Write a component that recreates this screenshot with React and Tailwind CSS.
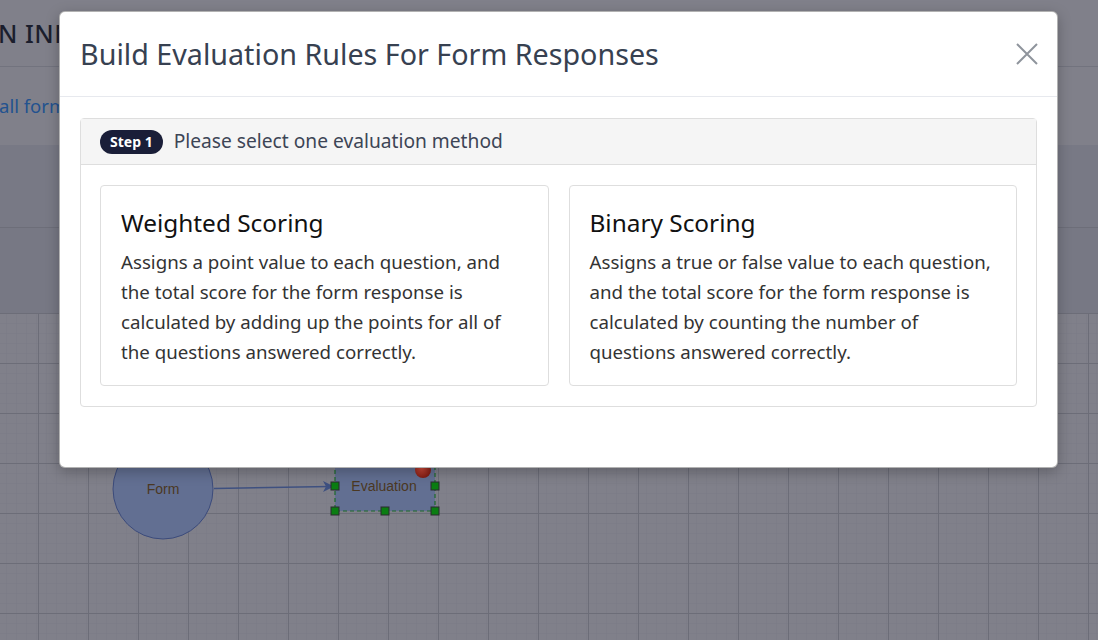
import React from "react";

function GridCanvas() {
  return (
    <svg className="absolute inset-0 h-full w-full" xmlns="http://www.w3.org/2000/svg">
      <defs>
        <pattern id="minor" x="38" y="0" width="10" height="10" patternUnits="userSpaceOnUse">
          <path d="M0 0 L10 0 M0 0 L0 10" stroke="#797a85" strokeWidth="1" fill="none" />
        </pattern>
        <pattern id="major" x="38" y="0" width="50" height="50" patternUnits="userSpaceOnUse">
          <rect width="50" height="50" fill="url(#minor)" />
          <path d="M0 0.5 L50 0.5 M0.5 0 L0.5 50" stroke="#6c6d78" strokeWidth="1" fill="none" />
        </pattern>
        <radialGradient id="redball" cx="0.4" cy="0.35" r="0.7">
          <stop offset="0" stopColor="#d04a3a" />
          <stop offset="1" stopColor="#7a1810" />
        </radialGradient>
      </defs>
      <rect width="100%" height="100%" fill="#80808a" />
      <rect width="100%" height="100%" fill="url(#major)" />
      {/* Diagram */}
      <circle cx="163" cy="176" r="50" fill="#626f92" stroke="#3c4b7b" strokeWidth="1" />
      <text x="163" y="181" textAnchor="middle" fontFamily="Liberation Sans, Arial, sans-serif" fontSize="14" fill="#4b3822">Form</text>
      <line x1="214" y1="175.5" x2="330" y2="173.5" stroke="#3e5080" strokeWidth="1.5" />
      <path d="M323 168 L334 173.5 L323 179 L326 173.5 Z" fill="#3e5080" />
      <rect x="335" y="148" width="100" height="50" fill="#626f92" stroke="#1c6a2a" strokeWidth="1.2" strokeDasharray="4 3" />
      <text x="384" y="178" textAnchor="middle" fontFamily="Liberation Sans, Arial, sans-serif" fontSize="14" fill="#4b3822">Evaluation</text>
      <circle cx="423" cy="157" r="8" fill="url(#redball)" />
      {[[335, 173], [435, 173], [335, 198], [385, 198], [435, 198]].map(([x, y], i) => (
        <rect key={i} x={x - 4} y={y - 4} width="8" height="8" fill="#0a7d12" stroke="#2b2b30" strokeWidth="1" />
      ))}
    </svg>
  );
}

function MethodCard({ title, lines }) {
  return (
    <div className="rounded-[4px] border border-[#dedede] bg-white px-[20px] pt-[21px] pb-[18px]">
      <h3 className="mb-[8px] text-[24.4px] leading-[32px] font-normal text-[#111]">{title}</h3>
      <p className="text-[18.7px] leading-[30px] text-[#333]">
        {lines.map((l, i) => (
          <span key={i} className="block whitespace-nowrap">{l}</span>
        ))}
      </p>
    </div>
  );
}

export default function App() {
  return (
    <div className="relative h-[640px] w-[1098px] overflow-hidden bg-[#80808a] font-['Noto_Sans',sans-serif]">
      {/* Background page (dimmed) */}
      <div className="flex h-[67px] items-center border-b border-[#72737e] pt-[1px]">
        <div className="w-[59px] overflow-hidden">
          <span className="-ml-[2px] block whitespace-nowrap text-[25px] font-medium tracking-[0.5px] text-[#1b1e2d]">N INNOVATION</span>
        </div>
      </div>
      <div className="flex h-[78px] items-center">
        <div className="w-[59px] overflow-hidden">
          <span className="-ml-[1px] block whitespace-nowrap text-[18.5px] text-[#22528f]">all forms</span>
        </div>
      </div>
      <div className="h-[83px] border-b border-[#6d6e79] bg-[#787985]" />
      <div className="h-[85px] bg-[#777884]" />
      <div className="relative h-[327px]">
        <GridCanvas />
      </div>

      {/* Modal */}
      <div className="absolute left-[59px] top-[11px] flex w-[999px] flex-col rounded-[6px] border border-black/30 bg-white shadow-[0_4px_14px_rgba(0,0,0,0.25)]">
        <div className="flex h-[85px] items-center justify-between border-b border-[#e7e9ee] px-[20px]">
          <h2 className="text-[28.7px] font-normal text-[#374151]">Build Evaluation Rules For Form Responses</h2>
          <button className="mr-[-2px] flex h-[24px] w-[24px] items-center justify-center">
            <svg width="22" height="22" viewBox="0 0 22 22" fill="none">
              <path d="M1 1 L21 21 M21 1 L1 21" stroke="#8f949c" strokeWidth="2" />
            </svg>
          </button>
        </div>
        <div className="px-[20px] pt-[21px] pb-[60px]">
          <div className="rounded-[4px] border border-[#dedede]">
            <div className="flex h-[46px] items-center gap-[11px] border-b border-[#dedede] bg-[#f5f5f5] px-[19px]">
              <span className="flex h-[24px] items-center rounded-full bg-[#1a1e38] px-[10px] text-[14px] font-bold text-white">Step 1</span>
              <span className="text-[19.2px] text-[#3d4556]">Please select one evaluation method</span>
            </div>
            <div className="grid grid-cols-2 gap-[20px] px-[19px] pt-[20px] pb-[20px]">
              <MethodCard
                title="Weighted Scoring"
                lines={[
                  "Assigns a point value to each question, and",
                  "the total score for the form response is",
                  "calculated by adding up the points for all of",
                  "the questions answered correctly.",
                ]}
              />
              <MethodCard
                title="Binary Scoring"
                lines={[
                  "Assigns a true or false value to each question,",
                  "and the total score for the form response is",
                  "calculated by counting the number of",
                  "questions answered correctly.",
                ]}
              />
            </div>
          </div>
        </div>
      </div>
    </div>
  );
}
